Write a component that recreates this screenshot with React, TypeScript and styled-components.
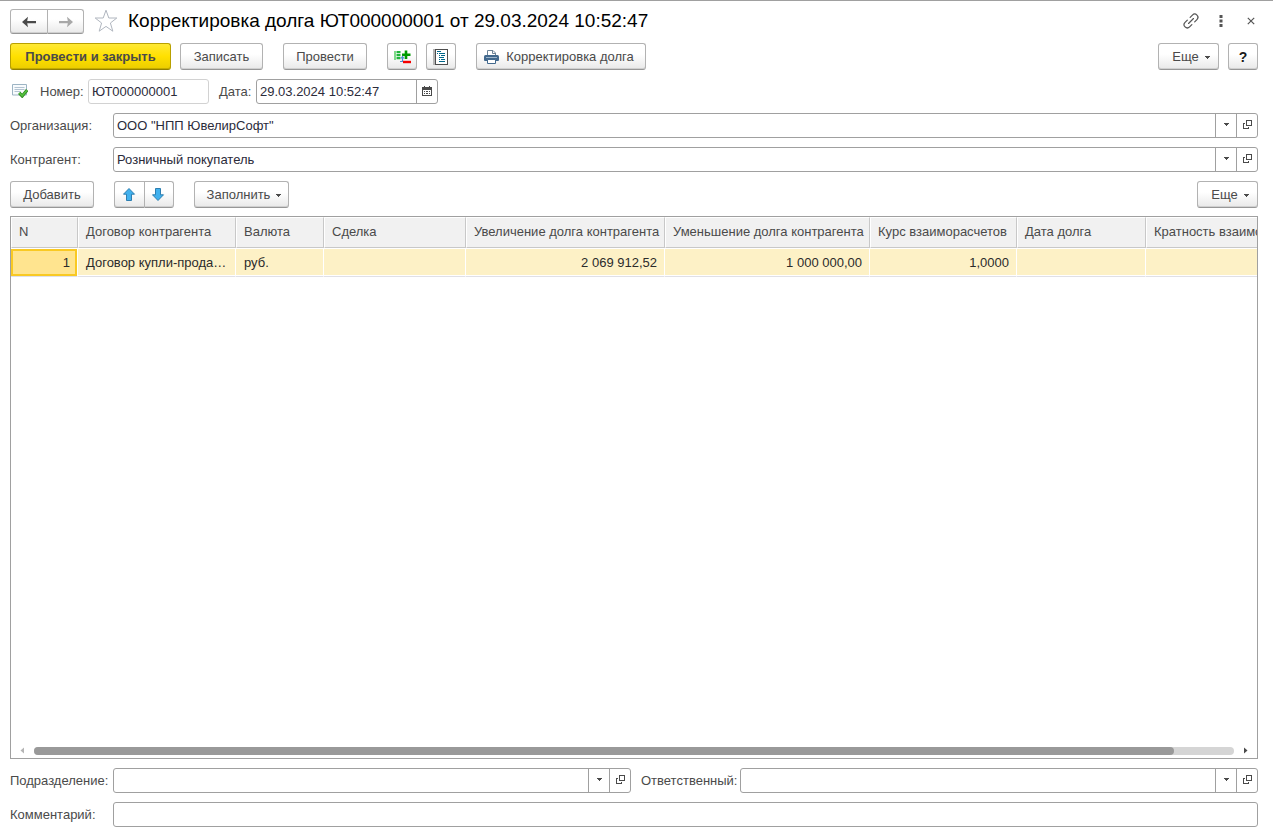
import React from 'react';
import styled, { createGlobalStyle, css } from 'styled-components';

const Global = createGlobalStyle`
  * { box-sizing: border-box; }
  body { margin: 0; background: #fff; }
  body, button, input { font-family: "Liberation Sans", Arial, sans-serif; font-size: 13px; line-height: 16px; color: #4a4a4a; }
  svg { display: block; flex: none; }
`;

const Page = styled.main`
  display: flex;
  flex-direction: column;
  gap: 9px;
  min-height: 100vh;
  padding: 8px 15px 8px 10px;
  border-top: 1px solid #a0a0a0;
`;

const TitleBar = styled.header`
  display: flex;
  align-items: center;
  height: 25px;
  margin-right: -8px;
`;

const Title = styled.h1`
  flex: 1;
  margin: 0;
  padding-bottom: 2px;
  font-size: 19px;
  line-height: 24px;
  font-weight: 400;
  color: #000;
  white-space: nowrap;
`;

const Bar = styled.div`
  display: flex;
  height: 27px;
`;

const Spacer = styled.div`
  flex: 1;
`;

const Button = styled.button<{ $primary?: boolean; $ml?: number; $w?: number }>`
  display: flex;
  align-items: center;
  justify-content: center;
  height: 27px;
  width: ${(p) => (p.$w ? p.$w + 'px' : 'auto')};
  margin: 0 0 0 ${(p) => p.$ml || 0}px;
  padding: 0;
  border: 1px solid #b2b2b2;
  border-bottom-color: #979797;
  border-radius: 3px;
  background: linear-gradient(#fff 40%, #e9e9e9);
  box-shadow: inset 0 -1px 0 #d0d0d0;
  white-space: nowrap;
  ${(p) =>
    p.$primary &&
    css`
      border-color: #b8a000;
      border-bottom-color: #948100;
      background: linear-gradient(#ffe935, #ffe000 50%, #ebcd00);
      box-shadow: inset 0 -1px 0 #c4ac00;
      font-weight: 700;
    `}
`;

const HelpButton = styled(Button)`
  font-size: 14px;
  font-weight: 700;
  color: #1a1a1a;
`;

const Pair = styled.div<{ $ml?: number; $h: number }>`
  display: flex;
  height: ${(p) => p.$h}px;
  margin-left: ${(p) => p.$ml || 0}px;
  ${Button} { height: ${(p) => p.$h}px; }
  ${Button}:first-child { border-radius: 3px 0 0 3px; }
  ${Button}:last-child { border-left: 0; border-radius: 0 3px 3px 0; }
`;

const IconButton = styled.button<{ $w: number }>`
  display: flex;
  align-items: center;
  justify-content: center;
  width: ${(p) => p.$w}px;
  height: 25px;
  padding: 0 0 2px;
  border: 0;
  background: none;
`;

const Row = styled.div`
  display: flex;
  align-items: center;
  height: 25px;
`;

const Status = styled.span`
  padding: 0 0 2px 2px;
`;

const Label = styled.label<{ $w: number; $ml?: number }>`
  flex: none;
  width: ${(p) => p.$w}px;
  margin-left: ${(p) => p.$ml || 0}px;
  white-space: nowrap;
`;

const Field = styled.div<{ $w?: number; $muted?: boolean }>`
  display: flex;
  ${(p) => (p.$w ? `flex: none; width: ${p.$w}px;` : 'flex: 1 1 0; min-width: 0;')}
  height: 25px;
  border: 1px solid ${(p) => (p.$muted ? '#d2d2d2' : '#a0a0a0')};
  border-radius: 3px;
  background: #fff;
  input {
    flex: 1;
    width: 0;
    min-width: 0;
    padding: 0 3px;
    border: 0;
    outline: 0;
    background: none;
    color: #2b2b3a;
  }
  button {
    display: flex;
    align-items: center;
    justify-content: center;
    width: 21px;
    padding: 0 0 2px;
    border: 0;
    border-left: 1px solid #a0a0a0;
    background: none;
  }
`;

const TableSection = styled.section`
  display: flex;
  flex: 1;
  flex-direction: column;
  gap: 8px;
`;

const TableFrame = styled.div`
  display: flex;
  flex: 1;
  flex-direction: column;
  overflow: hidden;
  border: 1px solid #a0a0a0;
`;

const TableView = styled.div`
  flex: 1;
  overflow: hidden;
`;

const Table = styled.table`
  width: 1340px;
  border-collapse: separate;
  border-spacing: 0;
  table-layout: fixed;
`;

const Th = styled.th`
  height: 31px;
  padding: 0 0 2px 7px;
  border: 1px solid #fff;
  border-right-color: #c8c8c8;
  border-bottom-color: #c8c8c8;
  background: #f1f1f1;
  font-weight: 400;
  text-align: left;
  white-space: nowrap;
`;

const Td = styled.td<{ $right?: boolean; $active?: boolean }>`
  height: 29px;
  padding: 0 7px 0 8px;
  border: 1px solid #fff;
  border-left: 0;
  border-bottom-color: #e0e0e6;
  background: #fdf1c6;
  box-shadow: inset 0 -1px 0 #fff;
  color: #2b2b2b;
  text-align: ${(p) => (p.$right ? 'right' : 'left')};
  white-space: nowrap;
  overflow: hidden;
  text-overflow: ellipsis;
  ${(p) =>
    p.$active &&
    css`
      background: #ffe48f;
      box-shadow: inset 0 0 0 2px #f9c923;
    `}
`;

const ScrollBar = styled.div`
  display: flex;
  align-items: center;
  gap: 8px;
  height: 15px;
  padding: 0 8px;
`;

const Track = styled.div`
  flex: 1;
  height: 8px;
  border-radius: 4px;
  background: #d5d5d5;
`;

const Thumb = styled.div`
  width: 95%;
  height: 8px;
  border-radius: 4px;
  background: #999;
`;

const Arrow = ({ left, color }: { left?: boolean; color: string }) => (
  <svg width="16" height="12" viewBox="0 0 16 12" fill={color}>
    {left ? (
      <path d="M1 6 7 .8 6.2 5H15v2.200H6.200L7 11.200Z" />
    ) : (
      <path d="M15 6 9 .8 9.800 5H1v2.200h8.800L9 11.200Z" />
    )}
  </svg>
);

const Star = () => (
  <svg width="24" height="24" viewBox="0 0 24 24" fill="#fff" stroke="#b0b6bf">
    <path d="M12 1.200 14.800 9h8l-6.400 5 2.400 8.200L12 17.400l-6.800 4.800L7.600 14 1.200 9h8Z" />
  </svg>
);

const LinkIcon = () => (
  <svg width="16" height="16" viewBox="-8 -8 16 16" fill="none" stroke="#555" strokeWidth="1.200" strokeLinecap="round">
    <g transform="rotate(-45)">
      <path d="M-2-3.200h-3.200a3.200 3.200 0 0 0 0 6.400h3.200" />
      <path d="M2-3.200h3.200a3.200 3.200 0 0 1 0 6.400H2" />
      <path d="M-3.500 0h7" />
    </g>
  </svg>
);

const Dots = () => (
  <svg width="4" height="12" viewBox="0 0 4 12" fill="#555">
    <path d="M.5 0h3v3h-3zM.5 4.500h3v3h-3zM.5 9h3v3h-3z" />
  </svg>
);

const Close = () => (
  <svg width="8" height="8" viewBox="0 0 8 8" stroke="#555" strokeWidth="1.200">
    <path d="m.8.8 6.400 6.400M7.200.8.8 7.200" />
  </svg>
);

const Caret = () => (
  <svg width="5" height="3" viewBox="0 0 5 3" fill="#4a4a4a" shapeRendering="crispEdges">
    <path d="M0 0h5v1H0zM1 1h3v1H1zM2 2h1v1H2z" />
  </svg>
);

const OpenIcon = () => (
  <svg width="9" height="9" viewBox="0 0 9 9" fill="none" stroke="#4a4a4a" shapeRendering="crispEdges">
    <path d="M3.500.5h5v5h-5zM2 3.500H.5v5h5V7" />
  </svg>
);

const Calendar = () => (
  <svg width="10" height="10" viewBox="0 0 10 10" fill="#4a4a4a" shapeRendering="crispEdges">
    <path fillRule="evenodd" d="M2 0h1v1h4V0h1v1h2v9H0V1h2zM1 4v5h8V4z" />
    <path d="M2 5h1v1H2zM4 5h2v1H4zM7 5h1v1H7zM2 7h1v1H2zM4 7h2v1H4zM7 7h1v1H7z" />
  </svg>
);

const PostingIcon = () => (
  <svg width="16" height="14" viewBox="0 0 16 14">
    <path d="M.5.5h14v10.500H.5Z" fill="#f8fbfd" stroke="#9db4c4" />
    <path d="M2.500 3.500h10M2.500 5.500h10M2.500 7.500h6" stroke="#b4c4d2" />
    <path d="m7.200 8.800 3 3.200 5-6" fill="none" stroke="#2f8a20" strokeWidth="3.200" />
    <path d="m7.400 9 2.800 2.800 4.800-5.600" fill="none" stroke="#55c23f" strokeWidth="1.600" />
  </svg>
);

const MovementsIcon = () => (
  <svg width="17" height="16" viewBox="0 0 17 16">
    <path d="M0 2h2v9H0z" fill="#7fd98a" />
    <path d="M2.500 2h4v2.200h-4zM2.500 5h4v2.200h-4zM2.500 8h4v2.200h-4z" fill="#1fb53a" />
    <path d="M12 1.500v8.500M8 5.700h8.500" stroke="#009a00" strokeWidth="2.600" />
    <path d="M6 12.500h2.500V8.500M7 9.500l1.500-2 1.500 2" fill="none" stroke="#4b8fd0" strokeWidth="1.200" />
    <path d="M9 11.800h8v2.400H9z" fill="#f40000" />
  </svg>
);

const ReportIcon = () => (
  <svg width="16" height="16" viewBox="0 0 16 16" shapeRendering="crispEdges">
    <path d="M0 0h2v16H0z" fill="#b5b5b5" />
    <path d="M2.500.5h12v15h-12z" fill="#fff" stroke="#4d4d4d" />
    <path d="M4 2h4v1H4zM6 4h6v1H6zM8 6h4v1H8zM6 8h5v1H6zM8 10h4v1H8zM6 12h6v1H6z" fill="#00678a" />
    <path d="M4 4h1v1H4zM6 6h1v1H6zM6 10h1v1H6z" fill="#00678a" />
  </svg>
);

const Printer = () => (
  <svg width="15" height="14" viewBox="0 0 15 14">
    <path d="M3.500 5V.5h5.500l2.500 2.500V5" fill="#fff" stroke="#6d8397" />
    <path d="M8.500.5V3.500h3" fill="none" stroke="#6d8397" />
    <path d="M1.500 5h12q1.500 0 1.500 1.500V10q0 1-1 1H1q-1 0-1-1V6.500Q0 5 1.500 5Z" fill="#41688d" />
    <path d="M2 7.500h11" stroke="#9bb4cb" />
    <path d="M3.500 9.500h8v4h-8z" fill="#fff" stroke="#41688d" />
  </svg>
);

const MoveArrow = ({ down }: { down?: boolean }) => (
  <svg width="14" height="14" viewBox="0 0 14 14" fill="#41b1ee" stroke="#2d7eb0" strokeLinejoin="round">
    {down ? (
      <path d="M6 12.500.500 6.800h3v-6.300h5v6.300h3Z" />
    ) : (
      <path d="M6 .500.500 6.200h3v6.300h5v-6.300h3Z" />
    )}
  </svg>
);

const ScrollArrow = ({ left }: { left?: boolean }) => (
  <svg width="7" height="7" viewBox="0 0 7 7" fill={left ? '#b5b5b5' : '#4a4a4a'}>
    <path d={left ? 'M5 .5v6L1.500 3.500Z' : 'M2 .5v6L5.500 3.500Z'} />
  </svg>
);

const MenuLabel = styled.span`
  display: flex;
  align-items: center;
  gap: 6px;
  padding-left: 5px;
  svg { margin-top: 2px; }
`;

const PrintLabel = styled.span`
  display: flex;
  align-items: center;
  gap: 7px;
  padding-right: 4px;
`;

const PickField = ({ id, value }: { id: string; value: string }) => (
  <Field>
    <input id={id} defaultValue={value} />
    <button aria-label="Выбрать"><Caret /></button>
    <button aria-label="Открыть"><OpenIcon /></button>
  </Field>
);

const columns = [
  { title: 'N', width: 67, value: '1', right: true },
  { title: 'Договор контрагента', width: 158, value: 'Договор купли-продажи' },
  { title: 'Валюта', width: 88, value: 'руб.' },
  { title: 'Сделка', width: 142, value: '' },
  { title: 'Увеличение долга контрагента', width: 199, value: '2 069 912,52', right: true },
  { title: 'Уменьшение долга контрагента', width: 205, value: '1 000 000,00', right: true },
  { title: 'Курс взаиморасчетов', width: 147, value: '1,0000', right: true },
  { title: 'Дата долга', width: 129, value: '' },
  { title: 'Кратность взаиморасчетов', width: 205, value: '' },
];

export default function App() {
  return (
    <>
      <Global />
      <Page>
        <TitleBar>
          <Pair $h={25}>
            <Button $w={38} aria-label="Назад"><Arrow left color="#4a4a4a" /></Button>
            <Button $w={36} aria-label="Вперед"><Arrow color="#a8a8a8" /></Button>
          </Pair>
          <IconButton $w={44} aria-label="В избранное"><Star /></IconButton>
          <Title>Корректировка долга ЮТ000000001 от 29.03.2024 10:52:47</Title>
          <IconButton $w={30} aria-label="Ссылка"><LinkIcon /></IconButton>
          <IconButton $w={30} aria-label="Меню"><Dots /></IconButton>
          <IconButton $w={30} aria-label="Закрыть"><Close /></IconButton>
        </TitleBar>

        <Bar>
          <Button $primary $w={161}>Провести и закрыть</Button>
          <Button $w={83} $ml={9}>Записать</Button>
          <Button $w={84} $ml={20}>Провести</Button>
          <Button $w={30} $ml={20} aria-label="Движения"><MovementsIcon /></Button>
          <Button $w={30} $ml={9} aria-label="Отчет"><ReportIcon /></Button>
          <Button $w={170} $ml={20}><PrintLabel><Printer />Корректировка долга</PrintLabel></Button>
          <Spacer />
          <Button $w={61}><MenuLabel>Еще<Caret /></MenuLabel></Button>
          <HelpButton $w={30} $ml={9}>?</HelpButton>
        </Bar>

        <Row>
          <Status><PostingIcon /></Status>
          <Label htmlFor="number" $w={48} $ml={12}>Номер:</Label>
          <Field $w={121} $muted><input id="number" defaultValue="ЮТ000000001" /></Field>
          <Label htmlFor="date" $w={37} $ml={10}>Дата:</Label>
          <Field $w={182}>
            <input id="date" defaultValue="29.03.2024 10:52:47" />
            <button aria-label="Календарь"><Calendar /></button>
          </Field>
        </Row>

        <Row>
          <Label htmlFor="org" $w={103}>Организация:</Label>
          <PickField id="org" value={'ООО "НПП ЮвелирСофт"'} />
        </Row>
        <Row>
          <Label htmlFor="partner" $w={103}>Контрагент:</Label>
          <PickField id="partner" value="Розничный покупатель" />
        </Row>

        <TableSection>
          <Bar>
            <Button $w={84}>Добавить</Button>
            <Pair $h={27} $ml={20}>
              <Button $w={31} aria-label="Вверх"><MoveArrow /></Button>
              <Button $w={29} aria-label="Вниз"><MoveArrow down /></Button>
            </Pair>
            <Button $w={95} $ml={20}><MenuLabel>Заполнить<Caret /></MenuLabel></Button>
            <Spacer />
            <Button $w={61}><MenuLabel>Еще<Caret /></MenuLabel></Button>
          </Bar>
          <TableFrame>
            <TableView>
              <Table>
                <colgroup>
                  {columns.map((c) => <col key={c.title} style={{ width: c.width }} />)}
                </colgroup>
                <thead>
                  <tr>{columns.map((c) => <Th key={c.title}>{c.title}</Th>)}</tr>
                </thead>
                <tbody>
                  <tr>
                    {columns.map((c, i) => (
                      <Td key={c.title} $right={c.right} $active={i === 0}>{c.value}</Td>
                    ))}
                  </tr>
                </tbody>
              </Table>
            </TableView>
            <ScrollBar>
              <ScrollArrow left />
              <Track><Thumb /></Track>
              <ScrollArrow />
            </ScrollBar>
          </TableFrame>
        </TableSection>

        <Row>
          <Label htmlFor="dept" $w={103}>Подразделение:</Label>
          <PickField id="dept" value="" />
          <Label htmlFor="resp" $w={99} $ml={10}>Ответственный:</Label>
          <PickField id="resp" value="" />
        </Row>
        <Row>
          <Label htmlFor="comment" $w={103}>Комментарий:</Label>
          <Field><input id="comment" /></Field>
        </Row>
      </Page>
    </>
  );
}
